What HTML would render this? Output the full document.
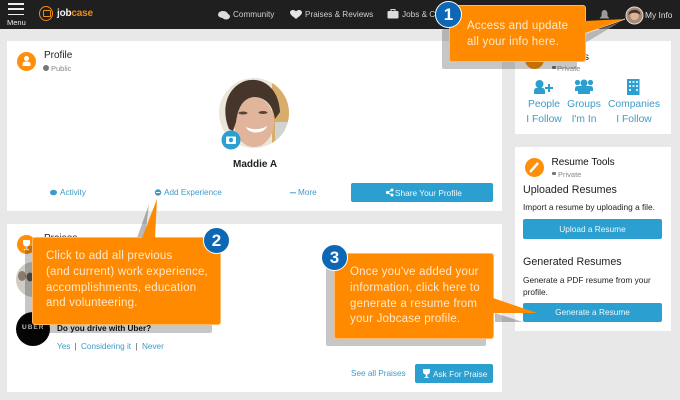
<!DOCTYPE html>
<html><head><meta charset="utf-8">
<style>
html,body{margin:0;padding:0}
body{width:680px;height:400px;overflow:hidden;position:relative;background:#e8e8e8;font-family:"Liberation Sans",sans-serif;color:#222}
.a{position:absolute;white-space:nowrap}
.card{position:absolute;background:#fff}
.link{color:#3f9bc7;font-size:8.2px}
.nav{color:#cfcfcf;font-size:8.2px;top:10px}
.btn{position:absolute;background:#2a9fd0;color:#f2f8fb;border-radius:2px;font-size:8.3px;text-align:center}
.co{position:absolute;background:#ff8a00;border-radius:2px;box-shadow:0 0 0 1px #ffb866;color:#ffe9cf;font-size:11.5px;line-height:15.8px;letter-spacing:.2px}
.sh{position:absolute;background:rgba(0,0,0,.22);border-radius:2px}
.bd{position:absolute;width:25px;height:25px;border-radius:50%;background:#0d67b5;border:1.5px solid #fff;color:#fff;font-weight:bold;font-size:17px;line-height:25px;text-align:center}
.oc{position:absolute;border-radius:50%;background:#ff8f0a}
.blue{color:#3f9bc7;font-size:10.3px;line-height:14.5px;text-align:center}
svg{position:absolute;left:0;top:0}
</style></head><body>

<div class="a" style="left:0;top:0;width:680px;height:29px;background:#1f1f1f"></div>
<div class="a" style="left:8px;top:3px;width:16px;height:1.5px;background:#eee"></div>
<div class="a" style="left:8px;top:8px;width:16px;height:1.5px;background:#eee"></div>
<div class="a" style="left:8px;top:13.500px;width:16px;height:1.5px;background:#eee"></div>
<div class="a" style="left:7px;top:17.500px;font-size:7.500px;color:#eee">Menu</div>
<div class="a" style="left:39px;top:6px;width:12px;height:13px;border:1.5px solid #f08c10;border-radius:50%"></div>
<div class="a" style="left:42.500px;top:10px;width:6px;height:5px;border:1px solid #f08c10;border-radius:1px"></div>
<div class="a" style="left:57px;top:8px;font-size:10px;font-weight:bold;color:#f4f4f4;letter-spacing:-.2px">job<span style="color:#f08c10">case</span></div>

<div class="a nav" style="left:233px">Community</div>
<div class="a nav" style="left:305px">Praises &amp; Reviews</div>
<div class="a nav" style="left:402px">Jobs &amp; C</div>
<div class="a nav" style="left:645px;color:#ddd;font-size:8.4px">My Info</div>

<svg width="680" height="400" style="z-index:1">
<ellipse cx="223" cy="14.500" rx="5" ry="3.500" fill="#ddd"/>
<ellipse cx="226" cy="16.500" rx="4" ry="3" fill="#ddd"/>
<path d="M296 11.500c-1.500-2.500-6-1.800-6 1 0 2.500 4 4.500 6 6.500 2-2 6-4 6-6.500 0-2.800-4.500-3.500-6-1z" fill="#e4e4e4"/>
<rect x="387.500" y="11" width="11" height="7.500" rx="1" fill="#ddd"/>
<rect x="391" y="9.500" width="4" height="2" fill="none" stroke="#ddd"/>
<path d="M604.500 10c-2 0-3 2-3 4v2l-2 2.500h10l-2-2.500v-2c0-2-1-4-3-4z" fill="#9a9a9a"/>
<circle cx="634.500" cy="15.500" r="8.500" fill="#a98a75"/>
<circle cx="634.500" cy="15.500" r="8.500" fill="none" stroke="#ddd" stroke-width="1"/>
<circle cx="634.500" cy="16" r="4.200" fill="#dcb49c"/>
<path d="M628.500 15c0-7 12-7 12 0-3-3-9-3-12 0z" fill="#4a3428"/>
</svg>

<div class="card" style="left:7px;top:41px;width:495px;height:170px"></div>
<div class="card" style="left:7px;top:224px;width:495px;height:168px"></div>
<div class="card" style="left:515px;top:41px;width:156px;height:93px"></div>
<div class="card" style="left:515px;top:147px;width:156px;height:184px"></div>

<div class="oc" style="left:17px;top:52px;width:19px;height:19px"></div>
<svg width="680" height="400"><circle cx="26.500" cy="58.500" r="2.500" fill="#fff"/><path d="M22.500 66v-2c0-2 2-2.500 4-2.500s4 .5 4 2.500v2z" fill="#fff"/></svg>
<div class="a" style="left:44px;top:50px;font-size:10px;color:#222">Profile</div>
<div class="a" style="left:43px;top:65px;width:6px;height:6px;border-radius:50%;background:#777"></div>
<div class="a" style="left:51px;top:63.500px;font-size:7.500px;color:#888">Public</div>
<div class="a link" style="left:466px;top:54px;color:#666">Edit</div>

<svg width="680" height="400">
<defs><clipPath id="c"><circle cx="254" cy="113" r="35"/></clipPath></defs>
<g clip-path="url(#c)">
<rect x="219" y="78" width="70" height="70" fill="#ebe6da"/>
<rect x="272" y="78" width="17" height="70" fill="#d8ad6c"/>
<rect x="275" y="122" width="14" height="30" fill="#d0d3d0"/>
<ellipse cx="254" cy="122" rx="20" ry="25" fill="#e0b59b"/>
<path d="M229 129C221 110 226 88 245 81C262 76 279 88 280 112L275 119C273 105 265 97 254 97C244 98 238 106 236 122L233 131z" fill="#45352b"/>
<path d="M246 127c6 3 15 3 21-1-2 8-18 9-21 1z" fill="#fff"/>
<ellipse cx="243" cy="113" rx="4.500" ry="1.500" fill="#5a4235"/>
<ellipse cx="263" cy="112.500" rx="4.500" ry="1.500" fill="#5a4235"/>
</g>
<circle cx="231" cy="140" r="9.500" fill="#2a9fd0"/>
<rect x="226" y="136.500" width="10" height="7.500" rx="1" fill="#fff"/>
<circle cx="231" cy="140" r="2.200" fill="#2a9fd0"/>
</svg>
<div class="a" style="left:233px;top:159px;font-size:10px;font-weight:bold;color:#222">Maddie A</div>

<svg width="680" height="400">
<ellipse cx="53.500" cy="192.500" rx="3.500" ry="2.800" fill="#3f9bc7"/>
<circle cx="158" cy="192.500" r="3.200" fill="#3f9bc7"/>
<rect x="156" y="192" width="4" height="1" fill="#fff"/>
<g fill="#3f9bc7"><circle cx="291" cy="192.700" r=".8"/><circle cx="293" cy="192.700" r=".8"/><circle cx="295" cy="192.700" r=".8"/></g>
</svg>
<div class="a link" style="left:60px;top:188px">Activity</div>
<div class="a link" style="left:164px;top:188px">Add Experience</div>
<div class="a link" style="left:298px;top:188px">More</div>

<div class="btn" style="left:351px;top:183px;width:142px;height:19px"></div>
<div class="a" style="left:395px;top:188px;font-size:8.300px;color:#f2f8fb">Share Your Profile</div>
<svg width="680" height="400"><g fill="#fff"><circle cx="387.500" cy="192.500" r="1.600"/><circle cx="392" cy="190" r="1.500"/><circle cx="392" cy="195" r="1.500"/></g><path d="M392 190L387.500 192.500 392 195" stroke="#fff" fill="none"/></svg>

<div class="oc" style="left:17px;top:235px;width:19px;height:19px"></div>
<svg width="680" height="400"><path d="M23 240h7v3c0 2-1.500 3.500-3.500 3.500s-3.500-1.500-3.500-3.500z" fill="#fff"/><rect x="25.500" y="246" width="2" height="3" fill="#fff"/><rect x="24" y="249" width="5" height="1.200" fill="#fff"/></svg>
<div class="a" style="left:44px;top:233px;font-size:10px">Praises</div>
<div class="a" style="left:16px;top:262px;width:34px;height:35px;border-radius:50%;background:#cfccc8"></div>
<svg width="680" height="400"><ellipse cx="22" cy="276" rx="4" ry="5" fill="#8d7a6d"/><ellipse cx="30" cy="277" rx="3.500" ry="4.500" fill="#5c5752"/></svg>
<div class="a" style="left:16px;top:312px;width:34px;height:34px;border-radius:50%;background:#050505"></div>
<div class="a" style="left:22px;top:324px;font-size:6.500px;font-weight:bold;color:#ddd;letter-spacing:1px">UBER</div>
<div class="a" style="left:57px;top:323.500px;font-size:8.200px;font-weight:bold;color:#111">Do you drive with Uber?</div>
<div class="a link" style="left:57px;top:341.500px">Yes</div>
<div class="a link" style="left:74.500px;top:341.500px;color:#555">|</div>
<div class="a link" style="left:81px;top:341.500px">Considering it</div>
<div class="a link" style="left:135.500px;top:341.500px;color:#555">|</div>
<div class="a link" style="left:142px;top:341.500px">Never</div>

<div class="a link" style="left:351px;top:369px">See all Praises</div>
<div class="btn" style="left:415px;top:364px;width:78px;height:19px"></div>
<div class="a" style="left:433px;top:369px;font-size:8.300px;color:#f2f8fb">Ask For Praise</div>
<svg width="680" height="400"><path d="M423 369h7v2.500c0 2-1.500 3-3.500 3s-3.500-1-3.500-3z" fill="#fff"/><rect x="425.800" y="374" width="1.500" height="3" fill="#fff"/><rect x="424.500" y="377" width="4" height="1" fill="#fff"/></svg>

<div class="oc" style="left:525px;top:50px;width:19px;height:19px"></div>
<div class="a" style="left:500px;top:52px;width:89px;text-align:right;font-size:10px;color:#111">Connections</div>
<div class="a" style="left:551.500px;top:65.500px;width:4px;height:3.500px;background:#777;border-radius:1px"></div>
<div class="a" style="left:557px;top:63.500px;font-size:7.500px;color:#888">Private</div>
<svg width="680" height="400" fill="#2a9fd0">
<circle cx="539.500" cy="84" r="4"/><path d="M534 94v-3c0-3 2.500-3.500 5.500-3.500s5.500.5 5.500 3.500v3z"/><path d="M545 87h3v-3h2v3h3v2h-3v3h-2v-3h-3z"/>
<circle cx="584" cy="83" r="3.500"/><circle cx="577.500" cy="82.500" r="2.600"/><circle cx="590.500" cy="82.500" r="2.600"/><path d="M578 94v-4c0-2 2.500-3 6-3s6 1 6 3v4z"/><path d="M575 89c0-2 1-3 3-3h12c2 0 3 1 3 3v2h-18z"/>
<rect x="627" y="79" width="12.500" height="16"/>
<g fill="#cfeaf5"><rect x="629" y="81" width="2" height="2"/><rect x="632.500" y="81" width="2" height="2"/><rect x="636" y="81" width="2" height="2"/><rect x="629" y="85" width="2" height="2"/><rect x="632.500" y="85" width="2" height="2"/><rect x="636" y="85" width="2" height="2"/><rect x="629" y="89" width="2" height="2"/><rect x="636" y="89" width="2" height="2"/></g>
</svg>
<div class="a blue" style="left:524px;top:98px;width:40px">People<br>I Follow</div>
<div class="a blue" style="left:564px;top:98px;width:40px">Groups<br>I'm In</div>
<div class="a blue" style="left:604px;top:98px;width:60px">Companies<br>I Follow</div>

<div class="oc" style="left:525px;top:158px;width:19px;height:19px"></div>
<svg width="680" height="400"><path d="M530 172l8-9" stroke="#fff" stroke-width="2.500"/></svg>
<div class="a" style="left:551.500px;top:157px;font-size:10px;color:#111">Resume Tools</div>
<div class="a" style="left:552px;top:171.500px;width:4px;height:3.500px;background:#777;border-radius:1px"></div>
<div class="a" style="left:558px;top:169.500px;font-size:7.500px;color:#888">Private</div>
<div class="a" style="left:523px;top:184px;font-size:10.700px;color:#222">Uploaded Resumes</div>
<div class="a" style="left:523px;top:202px;font-size:8.300px;color:#222">Import a resume by uploading a file.</div>
<div class="btn" style="left:523px;top:219px;width:139px;height:20px;line-height:20px">Upload a Resume</div>
<div class="a" style="left:523px;top:256px;font-size:10.700px;color:#222">Generated Resumes</div>
<div class="a" style="left:523px;top:273.500px;font-size:8.300px;line-height:12px;color:#222">Generate a PDF resume from your<br>profile.</div>
<div class="btn" style="left:523px;top:303px;width:139px;height:19px;line-height:19px">Generate a Resume</div>

<!-- callout shadows -->
<div class="sh" style="left:442px;top:29px;width:135px;height:40px"></div>
<div class="sh" style="left:25px;top:246px;width:187px;height:87px"></div>
<div class="sh" style="left:326px;top:262px;width:160px;height:84px"></div>
<svg width="680" height="400">
<path d="M149 204L137 238H145z" fill="rgba(0,0,0,.28)"/>
<path d="M495 313L523 322H495z" fill="rgba(0,0,0,.25)"/>
<path d="M585 34L620 22 585 43z" fill="rgba(150,150,150,.6)"/>
</svg>

<!-- callouts -->
<div class="co" style="left:450px;top:6px;width:135px;height:55px"><div class="a" style="left:17px;top:13px">Access and update<br>all your info here.</div></div>
<div class="co" style="left:33px;top:238px;width:187px;height:86px"><div class="a" style="left:13px;top:11px">Click to add all previous<br>(and current) work experience,<br>accomplishments, education<br>and volunteering.</div></div>
<div class="co" style="left:335px;top:254px;width:158px;height:84px"><div class="a" style="left:15px;top:11px">Once you've added your<br>information, click here to<br>generate a resume from<br>your Jobcase profile.</div></div>
<svg width="680" height="400">
<path d="M585 33L625 19" stroke="#ffd9a8" stroke-width="1"/>
<path d="M585 21L625 19 585 33z" fill="#ff8a00"/>
<path d="M157 199L142 238H155z" fill="#ff8a00"/>
<path d="M493 298L537 313H493z" fill="#ff8a00"/>
</svg>
<div class="bd" style="left:435px;top:1px">1</div>
<div class="bd" style="left:203px;top:227px">2</div>
<div class="bd" style="left:321px;top:244px">3</div>
</body></html>
